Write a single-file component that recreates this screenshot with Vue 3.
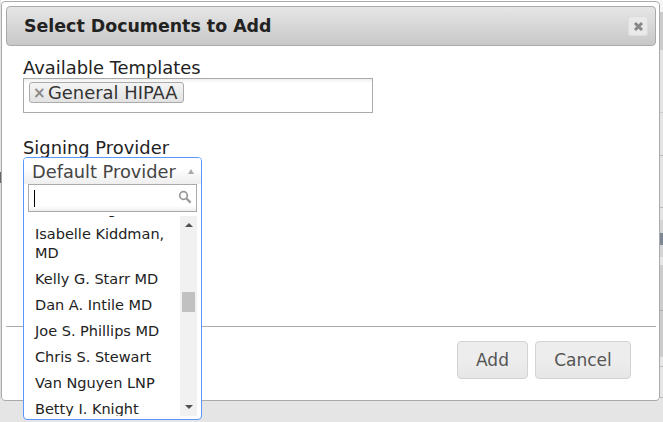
<template>
  <div class="page">
    <div class="dialog">
      <div class="titlebar">
        <span class="title">Select Documents to Add</span>
        <button class="close-btn">
          <svg width="11" height="11" viewBox="0 0 11 11">
            <path d="M2 2 L9 9 M9 2 L2 9" stroke="#888" stroke-width="3" fill="none" />
          </svg>
        </button>
      </div>

      <div class="content">
        <label class="field-label">Available Templates</label>
        <div class="multi-box">
          <span class="chip"><span class="chip-x">×</span>General HIPAA</span>
        </div>

        <label class="field-label second">Signing Provider</label>
        <div class="select-wrap">
          <div class="dropdown">
            <div class="select-head">
              <span>Default Provider</span>
              <span class="arrow-up"></span>
            </div>
            <div class="search">
              <span class="caret"></span>
              <svg class="search-icon" width="14" height="14" viewBox="0 0 14 14">
                <circle cx="5.5" cy="5.5" r="3.8" stroke="#999" stroke-width="1.7" fill="none" />
                <path d="M8.5 8.5 L12.6 12.6" stroke="#999" stroke-width="2.2" />
              </svg>
            </div>
            <div class="results">
              <ul class="result-list">
                <li v-for="item in providers" :key="item">{{ item }}</li>
              </ul>
              <div class="scrollbar">
                <span class="sb-up"></span>
                <span class="sb-thumb"></span>
                <span class="sb-down"></span>
              </div>
            </div>
          </div>
        </div>
      </div>

      <div class="footer">
        <button class="btn add">Add</button>
        <button class="btn cancel">Cancel</button>
      </div>
    </div>
  </div>
</template>

<script setup>
const providers = [
  'Sarah Long MD',
  'Isabelle Kiddman, MD',
  'Kelly G. Starr MD',
  'Dan A. Intile MD',
  'Joe S. Phillips MD',
  'Chris S. Stewart',
  'Van Nguyen LNP',
  'Betty I. Knight'
]
</script>

<style>
html, body {
  margin: 0;
  overflow: hidden;
}
</style>

<style scoped>
.page {
  width: 663px;
  height: 422px;
  box-sizing: border-box;
  padding: 1px 3px 0 1px;
  overflow: hidden;
  /* the table behind the dialog only shows as thin strips at both edges */
  background:
    linear-gradient(#f4f4f4 0 12px, #ccc 12px 50px, #e4e4e4 50px 112px, #ccc 112px 113px, #e4e4e4 113px 155px,
      #bbb 155px 156px, #e4e4e4 156px 207px, #bbb 207px 208px, #e4e4e4 208px 220px, #d4d4d4 220px 233px,
      #7d8794 233px 245px, #d4d4d4 245px 257px, #e6e6e6 257px 265px, #ccc 265px 310px, #aaa 310px 311px,
      #ccc 311px 357px, #e6e6e6 357px 366px, #bbb 366px 367px, #e6e6e6 367px 397px, #bbb 397px 398px,
      #e5e5e5 398px) right top / 3px 100% no-repeat,
    linear-gradient(#e4e4e4 0 172px, #666 172px 183px, #ddd 183px 400px, #e5e5e5 400px) left top / 1px 100% no-repeat,
    linear-gradient(#fff 0 400px, #e5e5e5 400px);
  font-family: "DejaVu Sans", Verdana, sans-serif;
  color: #222;
}

.dialog {
  height: 400px;
  box-sizing: border-box;
  display: flex;
  flex-direction: column;
  padding: 4px 3px 4px 4px;
  background: #fff;
  border: 1px solid #aaa;
  border-radius: 4px;
}

.titlebar {
  height: 40px;
  flex: none;
  box-sizing: border-box;
  display: flex;
  align-items: center;
  justify-content: space-between;
  padding: 0 7px 0 17px;
  background: linear-gradient(#e6e6e6, #c8c8c8);
  border: 1px solid #aaa;
  border-radius: 4px;
}

.title {
  font-size: 17.4px;
  font-weight: bold;
}

.close-btn {
  width: 20px;
  height: 20px;
  padding: 0;
  display: flex;
  align-items: center;
  justify-content: center;
  background: #e9e9e9;
  border: 1px solid #ddd;
  border-radius: 3px;
}

.content {
  flex: 1;
  padding: 11px 0 0 17px;
}

.field-label {
  display: block;
  font-size: 17.9px;
  line-height: 21px;
}

.field-label.second {
  margin-top: 24px;
  margin-bottom: -1px;
  padding-bottom: 0;
}

.multi-box {
  width: 350px;
  height: 35px;
  box-sizing: border-box;
  padding: 3px 5px;
  border: 1px solid #aaa;
  background: linear-gradient(#eee, #fff 4px);
}

.chip {
  display: inline-flex;
  align-items: center;
  height: 21px;
  box-sizing: border-box;
  padding: 0 5px 0 3px;
  font-size: 17.9px;
  color: #333;
  background: linear-gradient(#f4f4f4, #e2e2e2);
  border: 1px solid #aaa;
  border-radius: 3px;
}

.chip-x {
  width: 15px;
  font-weight: bold;
  font-size: 15px;
  color: #888;
}

.select-wrap {
  position: relative;
  height: 30px;
}

.dropdown {
  position: absolute;
  left: 0;
  top: 0;
  z-index: 2;
  width: 179px;
  height: 263px;
  box-sizing: border-box;
  background: #fff;
  border: 1px solid #5897fb;
  border-radius: 4px;
  overflow: hidden;
}

.select-head {
  height: 26px;
  box-sizing: border-box;
  display: flex;
  align-items: center;
  justify-content: space-between;
  padding: 0 7px 0 8px;
  font-size: 17.8px;
  color: #444;
  background: linear-gradient(#fff 40%, #eee);
}

.arrow-up {
  width: 0;
  height: 0;
  border-left: 3.5px solid transparent;
  border-right: 3.5px solid transparent;
  border-bottom: 5px solid #aaa;
}

.search {
  position: relative;
  height: 28px;
  box-sizing: border-box;
  margin: 0 4px;
  background: linear-gradient(#fff 80%, #eee);
  border: 1px solid #aaa;
}

.caret {
  position: absolute;
  left: 5px;
  top: 5px;
  width: 1px;
  height: 17px;
  background: #000;
}

.search-icon {
  position: absolute;
  right: 4px;
  top: 5px;
}

.results {
  height: 200px;
  margin: 4px 4px 0 4px;
  display: flex;
  overflow: hidden;
}

.result-list {
  flex: 1;
  list-style: none;
  margin: -20px 0 0 0;
  padding: 0;
  font-size: 14.5px;
  line-height: 20px;
  color: #222;
}

.result-list li {
  padding: 3px 7px;
}

.result-list li:nth-child(2) {
  line-height: 19px;
}

.scrollbar {
  position: relative;
  width: 17px;
  flex: none;
  background: #f1f1f1;
}

.sb-up,
.sb-down {
  position: absolute;
  left: 5px;
  width: 0;
  height: 0;
  border-left: 4px solid transparent;
  border-right: 4px solid transparent;
}

.sb-up {
  top: 7px;
  border-bottom: 4px solid #505050;
}

.sb-down {
  bottom: 7px;
  border-top: 4px solid #505050;
}

.sb-thumb {
  position: absolute;
  left: 2px;
  top: 76px;
  width: 13px;
  height: 20px;
  background: #c1c1c1;
}

.footer {
  height: 70px;
  flex: none;
  box-sizing: border-box;
  display: flex;
  justify-content: flex-end;
  align-items: flex-start;
  gap: 7px;
  padding: 14px 25px 0 0;
  border-top: 1px solid #aaa;
}

.btn {
  height: 38px;
  box-sizing: border-box;
  padding: 0;
  font-family: inherit;
  font-size: 17px;
  color: #555;
  background: linear-gradient(#ededed 50%, #e6e6e6);
  border: 1px solid #d3d3d3;
  border-radius: 4px;
}

.add {
  width: 71px;
}

.cancel {
  width: 96px;
}
</style>
